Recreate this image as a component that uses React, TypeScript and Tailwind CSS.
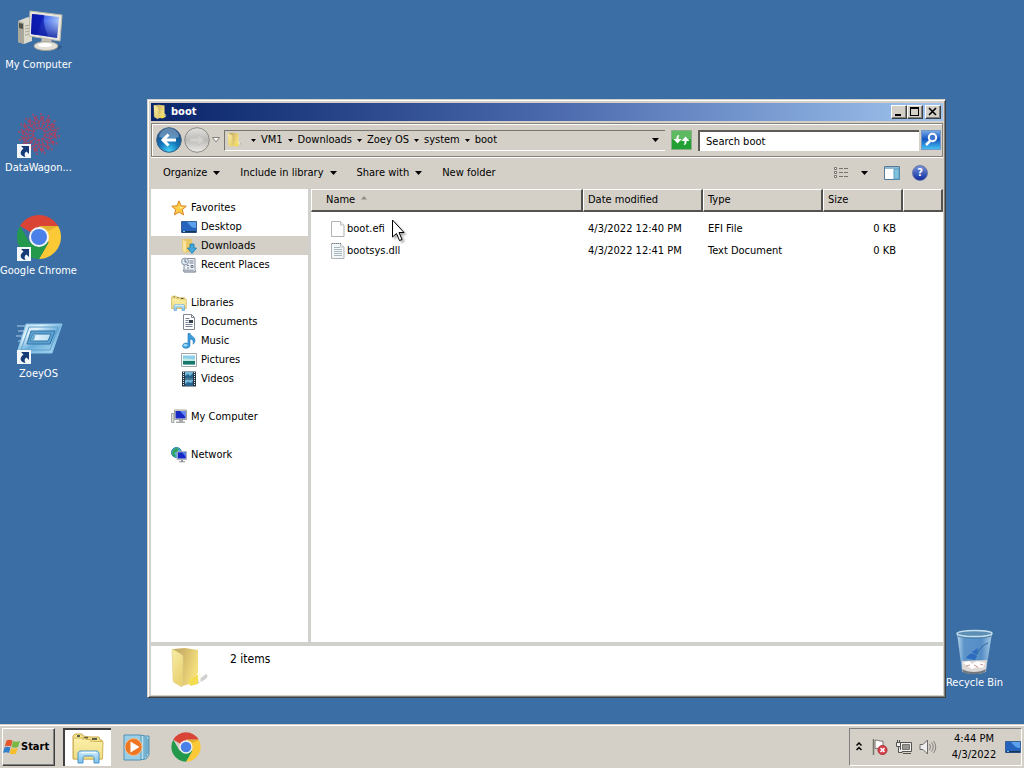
import React, { useState } from "react";

type IconProps = { className?: string };

const font = "font-['DejaVu_Sans_Condensed','DejaVu_Sans',sans-serif]";

function Computer({ className = "" }: IconProps) {
  return (
    <svg viewBox="0 0 48 48" className={className} aria-hidden="true">
      <defs>
        <linearGradient id="pc-screen" x1="0" y1="0" x2="1" y2="0.3">
          <stop offset="0" stopColor="#0c1cae" />
          <stop offset="0.4" stopColor="#1230d8" />
          <stop offset="0.5" stopColor="#4a70ee" />
          <stop offset="1" stopColor="#a9c6fb" />
        </linearGradient>
        <linearGradient id="pc-low" x1="0" y1="0" x2="0" y2="1">
          <stop offset="0.3" stopColor="#0a1a9c" stopOpacity="0" />
          <stop offset="1" stopColor="#0a1a9c" stopOpacity="0.85" />
        </linearGradient>
      </defs>
      <ellipse cx="37" cy="40" rx="10" ry="3" fill="#234a75" opacity="0.5" />
      <path d="M3 14l10-4 4 2v22l-8 3-6-2z" fill="#dcd9cd" />
      <path d="M3 14l6 2v21l-6-2z" fill="#aaa79b" />
      <path d="M4 16l4 1v5l-4-1z" fill="#4f514d" />
      <path d="M10 19l5-1M10 22l5-1M10 25l5-1M10 28l5-1" stroke="#a9a698" />
      <path d="M27 29l9 1 1 8-11-1z" fill="#c5c2b8" />
      <ellipse cx="31" cy="39" rx="12" ry="4.500" fill="#e3e0d8" stroke="#a6a399" />
      <ellipse cx="30" cy="38" rx="7" ry="2" fill="#fff" />
      <path d="M15 4l32 4-2 26-31-5z" fill="#e9e7df" stroke="#bcb9ac" />
      <path d="M17 7l27 3-2 21-26-4z" fill="url(#pc-screen)" />
      <path d="M17 7l27 3-2 21-26-4z" fill="url(#pc-low)" />
      <path d="M17 7l12 1c-1 7 1 14 4 21l-17-2z" fill="#0a14a2" opacity="0.6" />
    </svg>
  );
}

function Chrome({ className = "" }: IconProps) {
  return (
    <svg viewBox="0 0 48 48" className={className} aria-hidden="true">
      <path d="M24 24L4.950 13A22 22 0 0 1 43.050 13L24 13z" fill="#d94436" />
      <path d="M24 13h19.050A22 22 0 0 1 24 46l9.530-16.500z" fill="#fbc935" />
      <path d="M4.950 13A22 22 0 0 0 24 46l9.530-16.500L24 24 14.470 29.500z" fill="#24994b" />
      <path d="M43.050 13H24l9.500 5z" fill="#c99a27" opacity="0.5" />
      <circle cx="24" cy="24" r="10" fill="#f4f4f4" />
      <circle cx="24" cy="24" r="8" fill="#4a80e8" />
    </svg>
  );
}

function DataBurst({ className = "" }: IconProps) {
  const spokes = Array.from({ length: 16 }, (_, i) => i * 22.5);
  return (
    <svg viewBox="0 0 48 48" className={className} fill="none" aria-hidden="true">
      <g stroke="#b33d5b" strokeWidth="1.200" opacity="0.85">
        <circle cx="24" cy="24" r="6" strokeWidth="2" strokeDasharray="3 1" />
        <circle cx="24" cy="24" r="11" strokeDasharray="4 2" />
        <circle cx="24" cy="24" r="16" strokeWidth="2" strokeDasharray="3 4" />
        {spokes.map((a) => (
          <g key={a} transform={`rotate(${a} 24 24)`}>
            <path d="M24 17v-5l2-2V6M26 9l3-3M24 12l-2-3" />
            <circle cx="26" cy="4" r="1" fill="#c94158" stroke="none" />
          </g>
        ))}
      </g>
    </svg>
  );
}

function ProgramIcon({ className = "" }: IconProps) {
  return (
    <svg viewBox="0 0 48 48" className={className} aria-hidden="true">
      <defs>
        <linearGradient id="prog" x1="0" y1="0" x2="1" y2="1">
          <stop offset="0" stopColor="#a5d3ee" />
          <stop offset="0.3" stopColor="#dff2fb" />
          <stop offset="0.55" stopColor="#6aaedb" />
          <stop offset="1" stopColor="#b7e1f5" />
        </linearGradient>
        <linearGradient id="prog-slot" x1="0" y1="0" x2="1" y2="0">
          <stop offset="0" stopColor="#f4fbff" />
          <stop offset="1" stopColor="#b8dcf0" />
        </linearGradient>
      </defs>
      <path d="M2 10h9M3 15h7M1 20h7M3 25h4" stroke="#a5c8ea" strokeWidth="2" opacity="0.55" />
      <path d="M11 8h36L37 37H2z" fill="url(#prog)" stroke="#8ac6e8" />
      <path d="M14 11h29L35 34H6z" fill="none" stroke="#5d9fca" />
      <path d="M16 15h24l-5 13H12z" fill="#5fa3d0" stroke="#2f73a8" />
      <path d="M18 18h18l-3 7H15z" fill="url(#prog-slot)" stroke="#2f73a8" />
      <path d="M17.500 19h3l-1.500 5.500h-3.500z" fill="#68a9cf" />
    </svg>
  );
}

function Shortcut({ className = "" }: IconProps) {
  return (
    <svg viewBox="0 0 14 14" className={`${className} h-3.5 w-3.5`} aria-hidden="true">
      <path d="M0 0h14v14H0z" fill="#f3f6fa" />
      <path d="M4 2h8v8L9.500 7.500C7.500 8.500 7 10.500 8.500 13 3 12 2 8 6.500 4.500z" fill="#153a75" />
    </svg>
  );
}

function Bin({ className = "" }: IconProps) {
  return (
    <svg viewBox="0 0 48 48" className={className} aria-hidden="true">
      <defs>
        <linearGradient id="bin" x1="0" y1="0" x2="1" y2="0">
          <stop offset="0" stopColor="#b9d6ec" />
          <stop offset="0.2" stopColor="#5d95cb" />
          <stop offset="0.7" stopColor="#558dc5" />
          <stop offset="1" stopColor="#a9cbe6" />
        </linearGradient>
      </defs>
      <path d="M7 6l5 38c1 4 23 4 24 0l6-38z" fill="url(#bin)" />
      <path d="M12 34l25-1-1 11c-2 4-21 4-24 0z" fill="#ddd8d6" />
      <path d="M13 36l6-2 3 3 5-3 8 2-2 5-6-1-5 2z" fill="#fff" />
      <path d="M16 39l4-1M24 38l4 2M30 37l3 1" stroke="#c99a94" />
      <path d="M12 42c6 4 18 4 24 0l-1 3c-4 3-19 3-22 0z" fill="#6f7880" />
      <path d="M16 31c3-5 7-6 11-2l-2 4zM22 25l6-4-1 7z" fill="#2261bd" opacity="0.8" />
      <path d="M38 16c-5 2-9 6-11 11" stroke="#2e669c" fill="none" />
      <ellipse cx="24.500" cy="6.500" rx="17.500" ry="3" fill="#5d8fb5" stroke="#c6e0ee" strokeWidth="1.500" />
      <path d="M8 9c8 3 25 3 33 0" stroke="#4d7ea4" fill="none" />
    </svg>
  );
}

function Folder({ className = "", small = false }: IconProps & { small?: boolean }) {
  return (
    <svg viewBox={small ? "1 0 34 44" : "0 0 40 44"} className={className} preserveAspectRatio={small ? "none" : "xMidYMid"} aria-hidden="true">
      <defs>
        <linearGradient id="fold-a" x1="0" y1="0" x2="0.4" y2="1">
          <stop offset="0" stopColor="#f7eca6" />
          <stop offset="1" stopColor="#ead273" />
        </linearGradient>
        <linearGradient id="fold-b" x1="0" y1="0" x2="1" y2="0.4">
          <stop offset="0.3" stopColor="#c9b067" />
          <stop offset="1" stopColor="#f6e07c" />
        </linearGradient>
      </defs>
      <path d="M24 38l13-10c4 2 0 6-10 10z" fill="#777" opacity="0.35" />
      <path d="M4 3L16 2l13 2v32l-16 4z" fill="url(#fold-b)" />
      <path d="M20 34l9-5v9l-8 2z" fill="#f4dc4f" />
      <path d="M3 3l9 5c2 1 2 3 2 5l-1 28-7-4c-2-1-2-2-2-4z" fill="url(#fold-a)" stroke="#e4d48a" strokeWidth=".7" />
      <path d="M28 28h2.500v8" stroke="#fffbe3" fill="none" strokeWidth="2" />
    </svg>
  );
}

function Star() {
  return (
    <svg viewBox="0 0 16 16" className="h-4 w-4 shrink-0" aria-hidden="true">
      <path d="M8 .8l2 5 5.300.4-4 3.500 1.300 5.200L8 12.100l-4.600 2.800 1.300-5.200-4-3.500L6 5.800z" fill="#ffcc45" stroke="#da8425" />
      <path d="M8 3l1 4 4 .5-4 1z" fill="#fff5a8" />
    </svg>
  );
}

function DesktopIcon() {
  return (
    <svg viewBox="0 0 16 14" className="h-3.5 w-4 shrink-0" aria-hidden="true">
      <path d="M.5 1.500h15v11H.5z" fill="#2563bd" stroke="#3a5f92" />
      <path d="M6 2h9v6C10 8 9 5 6 2z" fill="#5ba0ec" />
      <path d="M1 11h14v1.500H1z" fill="#173459" />
      <path d="M2 11h2v1H2z" fill="#72c9ec" />
    </svg>
  );
}

function DownloadsIcon() {
  return (
    <svg viewBox="0 0 16 16" className="h-4 w-4 shrink-0" aria-hidden="true">
      <path d="M2 1.500l6-1 3 1v12l-6 1z" fill="#e8c767" />
      <path d="M1.500 1.500l4 1.500v12l-4-2z" fill="#fae49b" stroke="#e7c35b" strokeWidth=".6" />
      <path d="M9 6h4v4h2.500L11 15.500 6.500 10H9z" fill="#44a8dc" stroke="#1878ad" strokeWidth=".8" />
    </svg>
  );
}

function RecentIcon() {
  return (
    <svg viewBox="0 0 16 16" className="h-4 w-4 shrink-0" fill="none" aria-hidden="true">
      <path d="M5 1.500h9v11l1 2.500H3V9z" fill="#edf1f5" stroke="#8791a0" />
      <circle cx="4" cy="4.500" r="3.500" fill="#dbe4ef" stroke="#8e9cad" />
      <path d="M4 2v3h2M8.500 4h4M8.500 6h4M6 8.500h2M10 8.500h2v2h-2zM6 11h2" stroke="#6f7d8f" />
      <path d="M2 13h10l2 2H3z" fill="#b4bcc5" stroke="#8791a0" strokeWidth=".6" />
    </svg>
  );
}

function LibrariesIcon({ className = "h-4 w-4 shrink-0" }: IconProps) {
  return (
    <svg viewBox="0 0 32 32" className={className} aria-hidden="true">
      <defs>
        <linearGradient id="lib" x1="0" y1="0" x2="0" y2="1">
          <stop offset="0" stopColor="#fbf0a9" />
          <stop offset="1" stopColor="#f0dc85" />
        </linearGradient>
        <linearGradient id="lib-stand" x1="0" y1="0" x2="0" y2="1">
          <stop offset="0" stopColor="#c9ebfc" />
          <stop offset="1" stopColor="#7fc0ea" />
        </linearGradient>
      </defs>
      <path d="M1 4l2-2h7l1 2 7 1h9l1 3h2v19H1z" fill="#f6e38a" stroke="#c8a951" />
      <path d="M5 3h3v2H5zM12 5h4v1.500h-4zM20 6h5v2h-5z" fill="#5a6047" />
      <path d="M1.500 6H12l2 1.500h5l2 2h10l-.5 17.500h-29z" fill="url(#lib)" stroke="#d1b65d" />
      <path d="M11 6v2M19 8v2" stroke="#c8a951" />
      <path d="M6 31v-9c0-2 1-3 3-3h15c2 0 3 1 3 3v9h-5v-5c0-1-1-2-2-2h-7c-1 0-2 1-2 2v5z" fill="url(#lib-stand)" stroke="#4b96cb" />
      <path d="M9 20.500h15" stroke="#eefaff" strokeWidth="1.500" />
    </svg>
  );
}

function DocumentIcon() {
  return (
    <svg viewBox="0 0 16 16" className="h-4 w-4 shrink-0" aria-hidden="true">
      <path d="M2.500.5h8l3 3v12h-11z" fill="#fff" stroke="#7f8791" />
      <path d="M10.500.5v3h3M4.500 4.500h4M4.500 6.500h3M4.500 8.500h3M4.500 10.500h7M4.500 12.500h7" stroke="#778290" fill="none" />
      <path d="M8 6h4v3H8z" fill="#34414d" />
    </svg>
  );
}

function MusicIcon() {
  return (
    <svg viewBox="0 0 16 16" className="h-4 w-4 shrink-0" aria-hidden="true">
      <path d="M7 .5l2-.3c0 3 5 3 5 7 0 2-1 3-2 4 1-4-1-5-3-5v6c0 2.500-2.500 3-4.500 3C2.500 15.200 1.500 14 1.500 13c0-2.500 3-3.500 5.500-2.700z" fill="#3a9cdd" stroke="#2675b2" strokeWidth=".6" />
      <ellipse cx="4.500" cy="12.300" rx="2" ry="1.300" fill="#9edcf9" />
    </svg>
  );
}

function PicturesIcon() {
  return (
    <svg viewBox="0 0 16 14" className="h-3.5 w-4 shrink-0" aria-hidden="true">
      <path d="M.5.5h15v13H.5z" fill="#fff" stroke="#a0a7ab" />
      <path d="M2 2.500h12v9H2z" fill="#8bcfea" />
      <path d="M2 8c3-2 6 1 12-1v4.500H2z" fill="#17776a" />
      <path d="M2 6c4-2 7 1 12 0v2H2z" fill="#bfe9e4" />
    </svg>
  );
}

function VideosIcon() {
  return (
    <svg viewBox="0 0 16 16" className="h-4 w-4 shrink-0" aria-hidden="true">
      <path d="M1 .5h14v15H1z" fill="#273746" />
      <path d="M4 1h8v6.500H4zM4 8.500h8V15H4z" fill="#73b9dd" />
      <path d="M4 5l3-2 2 2 3-3v5H4zM4 13l3-2 3 1 2-2v5H4z" fill="#27658e" />
      <path d="M2.500 1v14M13.500 1v14" stroke="#e4edf2" strokeDasharray="1 1" />
    </svg>
  );
}

function MyComputerSmall() {
  return (
    <svg viewBox="0 0 16 16" className="h-4 w-4 shrink-0" aria-hidden="true">
      <path d="M.5 4.500h2.500v9H.5z" fill="#dedede" stroke="#85898b" strokeWidth=".7" />
      <path d="M3.500 1h12v9.500h-12z" fill="#e7e7e2" stroke="#a3a39a" />
      <path d="M4.500 2h10v7.500h-10z" fill="#1829c3" />
      <path d="M9 2h5.500v6z" fill="#6288ef" />
      <path d="M8 11h4v1.500H8zM5 12.500h9V14H5z" fill="#a8aaad" />
    </svg>
  );
}

function NetworkIcon() {
  return (
    <svg viewBox="0 0 16 16" className="h-4 w-4 shrink-0" aria-hidden="true">
      <circle cx="5.500" cy="5.500" r="5" fill="#55b8df" stroke="#257ba2" />
      <path d="M2 3l3-2 3 1-2 3-3 1 2 3-2 1-2-3z" fill="#32a15a" />
      <path d="M6 4.500h9.500v8H6z" fill="#d5d6dc" stroke="#8d8fa0" strokeWidth=".6" />
      <path d="M6.800 5.300h8v6.200h-8z" fill="#1328c5" />
      <path d="M11 5.300h3.800v4.700z" fill="#5682ec" />
      <path d="M10 13h2v1.200h2v1H8v-1h2z" fill="#8d9297" />
    </svg>
  );
}

function FileIcon({ lined = false }: { lined?: boolean }) {
  return (
    <svg viewBox="0 0 14 16" className="h-4 w-3.5 shrink-0" aria-hidden="true">
      <path d="M.5.5h9L13 4v11.500H.5z" fill={lined ? "#f3f7f8" : "#fdfdfd"} stroke="#b0b3b7" />
      <path d="M9.500.5V4H13" fill="#f0f1f2" stroke="#bfc1c4" />
      {lined && <path d="M3 4.500h6M3 6.500h8M3 8.500h8M3 10.500h8M3 12.500h8" stroke="#a9b8bf" />}
      {lined && <path d="M1 .5h9" stroke="#6e7c83" strokeDasharray="1 1" />}
    </svg>
  );
}

function Caret({ className = "h-1 w-[7px]" }: IconProps) {
  return (
    <svg viewBox="0 0 7 4" className={`${className} shrink-0`} aria-hidden="true">
      <path d="M0 0h7L3.500 4z" fill="#000" />
    </svg>
  );
}

function WindowsFlag() {
  return (
    <svg viewBox="0 0 18 18" className="h-[18px] w-[18px] shrink-0" aria-hidden="true">
      <path d="M3.500 2.500c2-1.300 4-1 6 0L8 8.500c-2-1-4-1.300-6.200 0z" fill="#e4572e" />
      <path d="M10 3c2 1 4.500 1 7 0l-2 6c-2 1-4.500 1-6.500 0z" fill="#79b843" />
      <path d="M1.500 9.500c2-1.300 4-1 6 0L6 15c-2-1-4-1.300-6 0z" fill="#347fc9" />
      <path d="M8.200 10c2 1 4 1 6.500 0L13 15.500c-2 1-4 1-6.500 0z" fill="#f7bd2d" />
    </svg>
  );
}

function MediaPlayer() {
  return (
    <svg viewBox="0 0 32 30" className="h-[30px] w-8" aria-hidden="true">
      <path d="M10 4h18v19l-3 4H10z" fill="#9dd0e8" stroke="#5795b5" />
      <path d="M7 3.500h16v24H7z" fill="#b7e2f1" stroke="#5795b5" />
      <path d="M3 3h17v25H3z" fill="#9bcfe8" stroke="#4e91b5" />
      <path d="M27 7v15M25 5v20" stroke="#488caf" />
      <circle cx="12.500" cy="15" r="8.500" fill="#ec7622" stroke="#f6bc85" />
      <path d="M9.500 9.500l9 5.500-9 5.500z" fill="#fff" />
    </svg>
  );
}

const desktopItems = [
  { name: "My Computer", Icon: Computer, shortcut: false },
  { name: "DataWagon...", Icon: DataBurst, shortcut: true },
  { name: "Google Chrome", Icon: Chrome, shortcut: true },
  { name: "ZoeyOS", Icon: ProgramIcon, shortcut: true },
];

const places = [
  {
    title: "Favorites",
    Icon: Star,
    items: [
      { name: "Desktop", Icon: DesktopIcon },
      { name: "Downloads", Icon: DownloadsIcon },
      { name: "Recent Places", Icon: RecentIcon },
    ],
  },
  {
    title: "Libraries",
    Icon: LibrariesIcon,
    items: [
      { name: "Documents", Icon: DocumentIcon },
      { name: "Music", Icon: MusicIcon },
      { name: "Pictures", Icon: PicturesIcon },
      { name: "Videos", Icon: VideosIcon },
    ],
  },
  { title: "My Computer", Icon: MyComputerSmall, items: [] },
  { title: "Network", Icon: NetworkIcon, items: [] },
];

const crumbs = ["VM1", "Downloads", "Zoey OS", "system", "boot"];

const files = [
  { name: "boot.efi", date: "4/3/2022 12:40 PM", type: "EFI File", size: "0 KB", lined: false },
  { name: "bootsys.dll", date: "4/3/2022 12:41 PM", type: "Text Document", size: "0 KB", lined: true },
];

const raised = "border border-t-white border-l-white border-r-[#404040] border-b-[#404040] shadow-[inset_-1px_-1px_0_#808080]";
const heading = "h-[23px] border-t border-r-2 border-b-2 border-l border-t-white border-r-[#55534f] border-b-[#55534f] border-l-white px-1 text-left font-normal";

function TitleBar() {
  return (
    <header className="flex h-[18px] items-center bg-linear-to-r from-[#0a246a] via-[#4a68ac] to-[#a0c4ee] pl-0.5 text-white">
      <Folder small className="h-4 w-[14px]" />
      <h1 className="ml-1 flex-1 text-[11px] font-bold">boot</h1>
      <button aria-label="Minimize" className={`h-3.5 w-4 bg-[#d4d0c8] ${raised}`}>
        <svg viewBox="0 0 14 12" className="h-3 w-3.5"><path d="M3 8h6v2H3z" fill="#000" /></svg>
      </button>
      <button aria-label="Maximize" className={`h-3.5 w-4 bg-[#d4d0c8] ${raised}`}>
        <svg viewBox="0 0 14 12" className="h-3 w-3.5"><path d="M2 1h9v9H2zM3 3v6h7V3z" fill="#000" fillRule="evenodd" /></svg>
      </button>
      <button aria-label="Close" className={`mr-0.5 ml-0.5 h-3.5 w-4 bg-[#d4d0c8] ${raised}`}>
        <svg viewBox="0 0 14 12" className="h-3 w-3.5"><path d="M3 2l7 7M10 2L3 9" stroke="#000" strokeWidth="1.600" /></svg>
      </button>
    </header>
  );
}

function AddressBar({ query, onQuery }: { query: string; onQuery: (s: string) => void }) {
  return (
    <div className="mt-0.5 flex h-[34px] items-center border border-[#85827b] pr-px pl-1 shadow-[inset_1px_1px_0_#fff,0_1px_0_#fff]">
      <button aria-label="Back" className="h-[26px] w-[26px] shrink-0">
        <svg viewBox="0 0 26 26">
          <defs>
            <radialGradient id="back" cx="50%" cy="95%" r="80%">
              <stop offset="0" stopColor="#45d5fb" />
              <stop offset="0.5" stopColor="#1379bc" />
              <stop offset="1" stopColor="#174a84" />
            </radialGradient>
          </defs>
          <circle cx="13" cy="13" r="12.300" fill="url(#back)" stroke="#3c5e82" />
          <path d="M3 10a10 9 0 0 1 20 0c-7 2-13 2-20 0z" fill="#a9c6de" opacity="0.5" />
          <path d="M12.500 7.500L7 13l5.500 5.500M7.500 13H20" fill="none" stroke="#fff" strokeWidth="3" />
        </svg>
      </button>
      <button aria-label="Forward" className="ml-0.5 h-[26px] w-[26px] shrink-0">
        <svg viewBox="0 0 26 26">
          <defs>
            <linearGradient id="forward" x1="0" y1="0" x2="0" y2="1">
              <stop offset="0" stopColor="#e2e1de" />
              <stop offset="0.5" stopColor="#bdbbb8" />
              <stop offset="1" stopColor="#eceae6" />
            </linearGradient>
          </defs>
          <circle cx="13" cy="13" r="12.300" fill="url(#forward)" stroke="#8b8985" />
          <path d="M14 7l6 6-6 6v-4H6v-4h8z" fill="#d3d1cd" stroke="#c6c4bf" />
        </svg>
      </button>
      <button aria-label="Recent pages" className="ml-0.5 flex w-2 shrink-0">
        <svg viewBox="0 0 8 6"><path d="M.5.5h7L4 5z" fill="#fff" stroke="#85827b" /></svg>
      </button>
      <nav aria-label="Address" className="ml-1 flex h-[21px] min-w-0 flex-1 items-center border-t border-l border-[#77746e] border-b border-b-white pl-0.5">
        <Folder small className="mr-1.5 h-4 w-[14px] shrink-0" />
        {crumbs.map((c) => (
          <span key={c} className="flex items-center whitespace-nowrap">
            <Caret className="mx-1 h-[3px] w-[5px]" />
            <a href="#folder" className="px-px">{c}</a>
          </span>
        ))}
        <button aria-label="Previous locations" className="mr-0.5 ml-auto p-1"><Caret /></button>
      </nav>
      <button aria-label="Refresh" className="ml-1.5 h-5 w-[21px] shrink-0">
        <svg viewBox="0 0 21 20">
          <path d="M.5.5h20v19H.5z" fill="#23a033" stroke="#8bac89" />
          <path d="M1 1h19v8C14 12 8 12 1 9z" fill="#83cb7f" opacity="0.6" />
          <path d="M8.500 5C6 5 5.500 6.500 5.500 8v1h-3l4 4.500 4-4.500h-3c0-2 0-3 1-4zM12.500 15c2.500 0 3-1.500 3-3v-1h3l-4-4.500-4 4.500h3c0 2 0 3-1 4z" fill="#fff" />
        </svg>
      </button>
      <input
        aria-label="Search boot"
        placeholder="Search boot"
        value={query}
        onChange={(e) => onQuery(e.target.value)}
        className="ml-1.5 h-[21px] w-[221px] shrink-0 border-t-2 border-l-2 border-[#5d5b57] bg-white px-1.5 outline-none placeholder:text-black"
      />
      <button aria-label="Search" className="ml-0.5 h-5 w-5 shrink-0">
        <svg viewBox="0 0 20 20">
          <defs>
            <linearGradient id="search" x1="0" y1="0" x2="0" y2="1">
              <stop offset="0" stopColor="#7bade9" />
              <stop offset="0.45" stopColor="#1554c1" />
              <stop offset="1" stopColor="#46c5f3" />
            </linearGradient>
          </defs>
          <path d="M.5.5h19v19H.5z" fill="url(#search)" stroke="#7398c7" />
          <circle cx="11.500" cy="7.500" r="3.700" fill="#3e75ce" stroke="#fff" strokeWidth="2" />
          <path d="M9 11l-4 4" stroke="#fff" strokeWidth="2.500" />
        </svg>
      </button>
    </div>
  );
}

function Toolbar() {
  return (
    <div className="flex h-8 items-center pr-[15px] pl-3" role="toolbar">
      <button className="flex items-center gap-1.5">Organize<Caret /></button>
      <button className="ml-5 flex items-center gap-1.5">Include in library<Caret /></button>
      <button className="ml-5 flex items-center gap-1.5">Share with<Caret /></button>
      <button className="ml-5">New folder</button>
      <button aria-label="Change view" className="ml-auto">
        <svg viewBox="0 0 16 14" className="h-3.5 w-4" fill="none">
          <path d="M1.500 1.500h2v2h-2zM1.500 5.500h2v2h-2zM1.500 9.500h2v2h-2z" fill="#fff" stroke="#77746f" />
          <path d="M6 2.500h4M6 6.500h4M6 10.500h4M11 2.500h4M11 6.500h4M11 10.500h4" stroke="#77746f" />
        </svg>
      </button>
      <button aria-label="More view options" className="ml-3"><Caret /></button>
      <button aria-label="Preview pane" className="ml-4">
        <svg viewBox="0 0 16 14" className="h-3.5 w-4">
          <path d="M.5.5h15v13H.5z" fill="#fff" stroke="#527b9c" />
          <path d="M1 1h14v2H1z" fill="#91b9d2" />
          <path d="M10 3h5v10h-5z" fill="#7fc2df" stroke="#5e9dbf" />
        </svg>
      </button>
      <button aria-label="Help" className="ml-3 flex h-4 w-4 items-center justify-center rounded-full border border-[#6674a6] bg-linear-to-b from-[#7891d6] to-[#1529a2] text-[11px] font-bold text-white">?</button>
    </div>
  );
}

function Sidebar() {
  const [selected, setSelected] = useState("Downloads");
  return (
    <nav aria-label="Places" className="w-[157px] shrink-0 bg-white pt-[9px]">
      {places.map(({ title, Icon, items }) => (
        <section key={title} className="mb-[19px]">
          <button className="flex h-[19px] w-full items-center gap-1 pl-5 text-left"><Icon />{title}</button>
          <ul>
            {items.map((item) => (
              <li key={item.name}>
                <button
                  onClick={() => setSelected(item.name)}
                  className={`flex h-[19px] w-full items-center gap-1 pl-[30px] text-left ${selected === item.name ? "bg-[#d4d0c8]" : ""}`}
                >
                  <item.Icon />{item.name}
                </button>
              </li>
            ))}
          </ul>
        </section>
      ))}
    </nav>
  );
}

function FileList() {
  return (
    <div className="min-w-0 flex-1 bg-white">
      <table className="w-full table-fixed border-separate border-spacing-0">
        <colgroup>
          <col />
          <col className="w-[120px]" />
          <col className="w-[120px]" />
          <col className="w-20" />
          <col className="w-10" />
        </colgroup>
        <thead className="bg-[#d4d0c8]">
          <tr>
            <th className={`${heading} pl-[14px]`}>
              <span className="flex items-center gap-1.5">
                Name
                <svg viewBox="0 0 6 4" className="mb-1 h-1 w-1.5"><path d="M0 3.500L3 0l3 3.500z" fill="#908d87" /></svg>
              </span>
            </th>
            <th className={heading}>Date modified</th>
            <th className={heading}>Type</th>
            <th className={heading}>Size</th>
            <td className={heading}></td>
          </tr>
        </thead>
        <tbody>
          <tr className="h-1.5"><td colSpan={5}></td></tr>
          {files.map((f) => (
            <tr key={f.name} className="h-[22px]">
              <td className="pl-5"><a href="#file" className="flex items-center gap-0.5"><FileIcon lined={f.lined} />{f.name}</a></td>
              <td className="pl-[5px] whitespace-nowrap">{f.date}</td>
              <td className="pl-[5px]">{f.type}</td>
              <td className="pr-[7px] text-right">{f.size}</td>
              <td></td>
            </tr>
          ))}
        </tbody>
      </table>
    </div>
  );
}

function Explorer() {
  const [query, setQuery] = useState("");
  return (
    <main className="absolute top-[99px] right-[78px] bottom-[70px] left-[147px] flex flex-col border border-t-[#d4d0c8] border-r-[#404040] border-b-[#404040] border-l-[#d4d0c8] bg-[#d4d0c8] p-0.5 shadow-[inset_1px_1px_0_#fff,inset_-1px_-1px_0_#808080]">
      <div className="flex min-h-0 flex-1 flex-col border-t border-l border-[#d4d0c8]">
        <TitleBar />
        <AddressBar query={query} onQuery={setQuery} />
        <Toolbar />
        <div className="flex min-h-0 flex-1">
          <Sidebar />
          <div className="w-[3px] shrink-0 bg-[#d0d0cd]" />
          <FileList />
        </div>
        <footer className="flex h-[53px] border-t-4 border-[#d0d0cd] bg-white pl-[18px]">
          <Folder className="h-11 w-10" />
          <p className="mt-[5px] ml-[21px] text-[12px]">2 items</p>
        </footer>
      </div>
    </main>
  );
}

function Taskbar() {
  return (
    <footer className="flex h-11 items-center border-t border-[#d4d0c8] bg-[#d4d0c8] pr-0.5 pl-0.5 shadow-[inset_0_1px_0_#fff]">
      <button className={`flex h-[38px] w-[53px] items-center bg-[#d4d0c8] text-[11px] font-bold ${raised}`}>
        <WindowsFlag />Start
      </button>
      <button aria-label="File explorer" className="ml-2 flex h-[38px] w-12 items-center justify-center border-t-2 border-l-2 border-[#404040] bg-white">
        <LibrariesIcon className="h-8 w-8" />
      </button>
      <button aria-label="Media player" className="ml-2.5 flex h-[38px] w-8 items-center"><MediaPlayer /></button>
      <button aria-label="Google Chrome" className="ml-[17px] h-8 w-8"><Chrome /></button>
      <div className="ml-auto flex h-[38px] items-center border border-t-[#808080] border-r-white border-b-white border-l-[#808080] pl-1.5">
        <button aria-label="Show hidden icons">
          <svg viewBox="0 0 6 9" className="h-[9px] w-1.5" fill="none" stroke="#000" strokeWidth="1.500"><path d="M.5 3.500L3 1l2.500 2.500M.5 8L3 5.500 5.500 8" /></svg>
        </button>
        <button aria-label="Action center" className="ml-[9px]">
          <svg viewBox="0 0 18 18" className="h-[18px] w-[18px]">
            <path d="M2.500 1v16" stroke="#77746f" strokeWidth="1.500" />
            <path d="M4 2.500c3-1.500 4 1.500 8 .5v8c-4 1-5-1.500-8-.5z" fill="#fff" stroke="#77746f" />
            <circle cx="11.500" cy="12" r="4.500" fill="#d8404b" stroke="#a92c37" />
            <path d="M9.500 10l4 4M13.500 10l-4 4" stroke="#fff" strokeWidth="1.600" />
          </svg>
        </button>
        <button aria-label="Network status" className="ml-[6px]">
          <svg viewBox="0 0 18 16" className="h-4 w-[18px]">
            <path d="M5.500 3.500h11v9h-11z" fill="#f2f1ee" stroke="#55534f" />
            <path d="M7.500 5.500h7v5h-7z" fill="#989692" stroke="#77746f" />
            <path d="M8 14.500h8M1.500 3.500h4v4h-4zM2.500 3V1M4.500 3V1M3.500 8v5.500h4" fill="#eee" stroke="#55534f" />
          </svg>
        </button>
        <button aria-label="Volume" className="ml-[6px]">
          <svg viewBox="0 0 18 16" className="h-4 w-[18px]" fill="none">
            <path d="M1 5.500h3L8.500 1v14L4 10.500H1z" fill="#eee" stroke="#6d6a66" />
            <path d="M10.500 5q2 3 0 6M12.500 3.500q3.500 4.500 0 9M14.500 2q4.500 6 0 12" stroke="#85827d" />
          </svg>
        </button>
        <time className="ml-3 w-[50px] text-center leading-4">4:44 PM<br />4/3/2022</time>
        <button aria-label="Show desktop" className="ml-1.5"><DesktopIcon /></button>
      </div>
    </footer>
  );
}

export default function App() {
  return (
    <div className={`relative flex h-screen flex-col overflow-hidden bg-[#3b6ea5] text-[11px] leading-4 text-black ${font}`}>
      <ul className="flex min-h-0 w-[77px] flex-1 flex-col gap-[37px] pt-[7px] text-white">
        {desktopItems.map(({ name, Icon, shortcut }) => (
          <li key={name}>
            <button className="flex w-full flex-col items-center gap-0.5 whitespace-nowrap">
              <span className="relative h-12 w-12">
                <Icon className="h-12 w-12" />
                {shortcut && <Shortcut className="absolute bottom-0 left-0.5" />}
              </span>
              {name}
            </button>
          </li>
        ))}
      </ul>
      <button className="absolute right-[21px] bottom-[77px] flex flex-col items-center text-white">
        <Bin className="h-12 w-12" />
        Recycle Bin
      </button>
      <Explorer />
      <svg viewBox="0 0 14 23" className="pointer-events-none absolute top-[219px] left-[391px] h-[23px] w-3.5 drop-shadow-[2px_2px_1px_#0005]" aria-hidden="true">
        <path d="M1.500 1v17l4-3.500 3 7 2.500-1-3-7H13z" fill="#fff" stroke="#000" />
      </svg>
      <Taskbar />
    </div>
  );
}
